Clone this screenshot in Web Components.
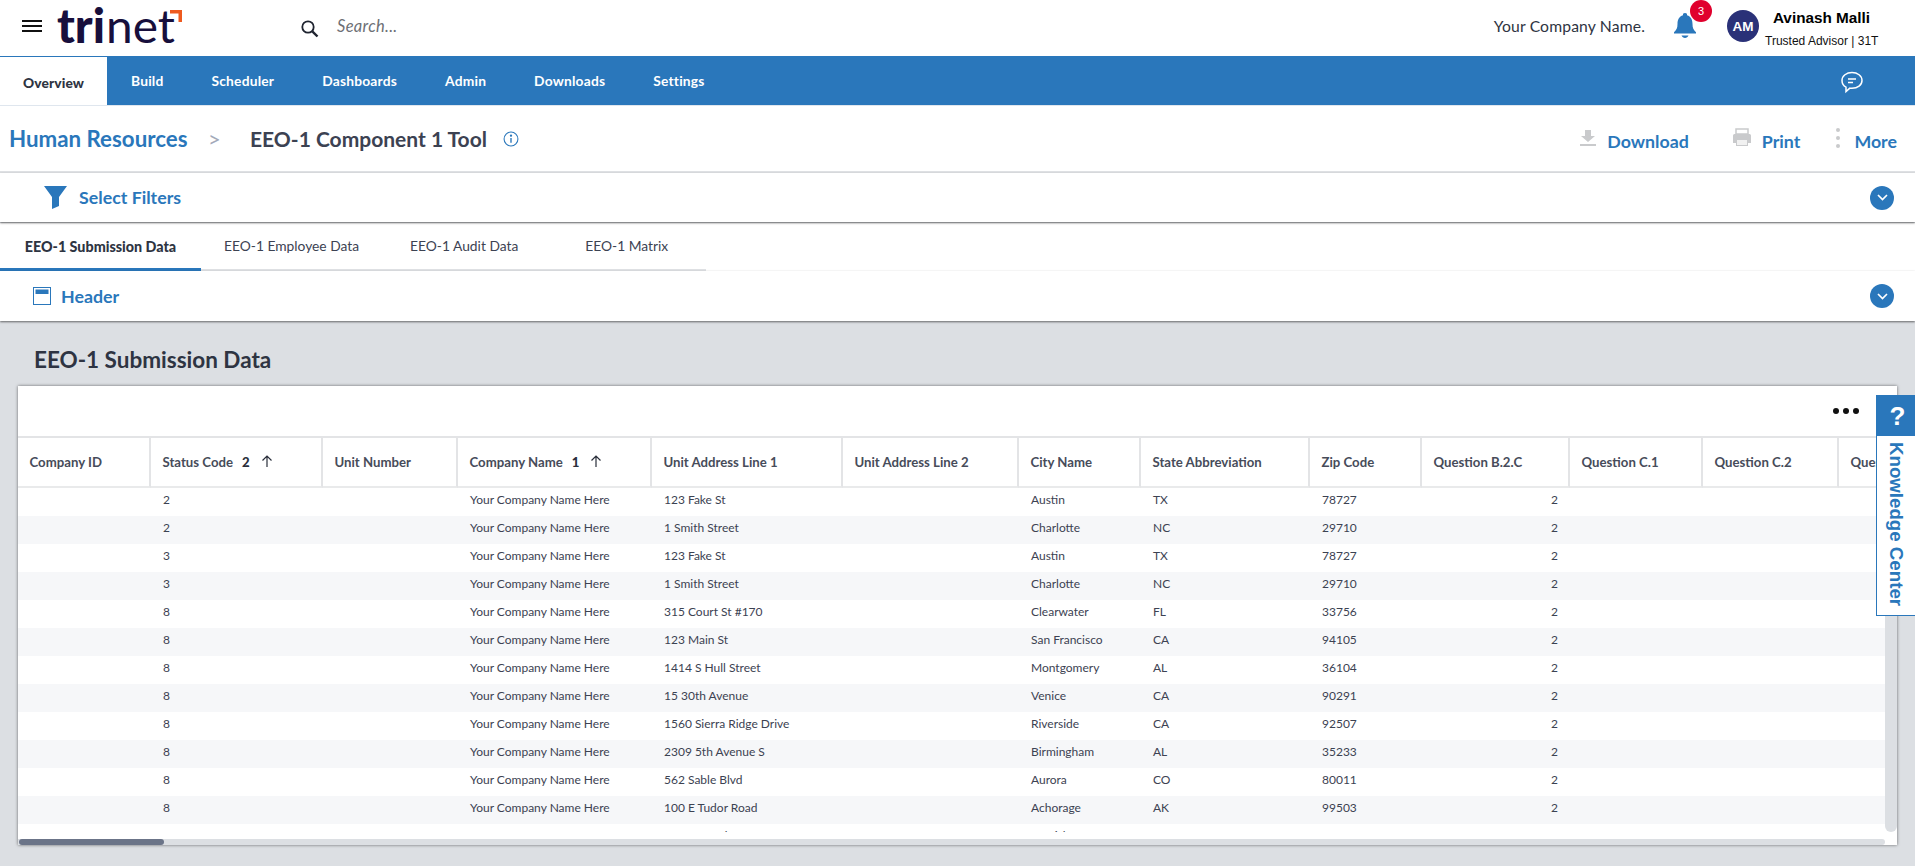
<!DOCTYPE html>
<html><head><meta charset="utf-8"><style>
html,body{margin:0;padding:0;background:#dcdfe3;height:866px;overflow:hidden}
body{font-family:Lato,"Liberation Sans",sans-serif;color:#2e3442}
</style></head><body>
<app-top></app-top>
<app-nav></app-nav>
<page-title></page-title>
<collapse-bar label="Select Filters" icon="filter" pad="44" gap="12" h="49" lift="2"></collapse-bar>
<tab-strip></tab-strip>
<collapse-bar label="Header" icon="header" pad="33" gap="10" h="50" lift="0"></collapse-bar>
<data-panel></data-panel>
<kc-tab></kc-tab>
<script>
const BLUE='#2a77bb';
function def(name,css,html,init){customElements.define(name,class extends HTMLElement{connectedCallback(){if(this.shadowRoot)return;const r=this.attachShadow({mode:'open'});r.innerHTML='<style>'+css+'</style>'+(typeof html==='function'?html(this):html);init&&init(r,this)}})}
def('app-top',`:host{display:flex;align-items:center;height:56px;background:#fff;position:relative}
.menu{margin-left:22px;margin-bottom:4px;width:20px;height:12px;display:flex;flex-direction:column;justify-content:space-between;flex:none}
.menu i{height:2px;background:#111;display:block}
.logo{margin-left:14px;width:130px;height:56px;flex:none;display:block}
.s{margin-left:114px;margin-top:2px;width:20px;height:20px;flex:none}
.search{margin-left:17px;font-style:italic;font-size:16.500px;color:#6d6f75;letter-spacing:.3px;margin-bottom:4px}
.sp{flex:1}
.co{font-size:15.700px;color:#2e3442;margin-right:28px;letter-spacing:.15px;margin-bottom:4px}
.bell{position:relative;width:30px;height:46px;margin-right:24px;align-self:flex-start}
.bell svg{position:absolute;left:0;top:12px}
.badge{position:absolute;left:17px;top:0;width:22px;height:22px;border-radius:50%;background:#e0002d;color:#fff;font:11px "Liberation Sans",sans-serif;display:flex;align-items:center;justify-content:center}
.av{width:32px;height:32px;border-radius:50%;background:#2a3178;color:#fff;font:700 13.500px "Liberation Sans",sans-serif;display:flex;align-items:center;justify-content:center;margin-right:6px;flex:none;margin-bottom:4px}
.who{width:113px;text-align:center;margin-right:37px;font-family:"Liberation Sans",sans-serif;color:#000;align-self:flex-start;flex:none;white-space:nowrap}
.who b{display:block;font-size:15.300px;line-height:18px;margin-top:9px}
.who span{display:block;font-size:12px;line-height:16px;margin-top:6px;color:#111}`,
`<div class="menu"><i></i><i></i><i></i></div>
<svg class="logo" viewBox="0 0 130 56"><text x="1" y="43" font-family="Lato,sans-serif" font-weight="900" font-size="47" fill="#170f3c" textLength="48" lengthAdjust="spacingAndGlyphs">tri</text><text x="50" y="43" font-family="Lato,sans-serif" font-weight="400" font-size="47" fill="#170f3c" textLength="69" lengthAdjust="spacingAndGlyphs">net</text><path d="M114 10h12v12h-3.500v-8.500h-8.500z" fill="#ee5a1f"/></svg>
<svg class="s" viewBox="0 0 20 20"><circle cx="8" cy="8" r="5.700" fill="none" stroke="#1f2430" stroke-width="1.800"/><path d="M12.300 12.300l5.200 5.200" stroke="#1f2430" stroke-width="2.400"/></svg>
<div class="search">Search...</div><div class="sp"></div>
<div class="co">Your Company Name.</div>
<div class="bell"><svg width="24" height="28" viewBox="0 0 24 28"><path d="M12 1a2 2 0 0 1 2 2.300c4 1.200 5.500 4.500 5.500 8.700 0 4 1 6 3.500 8.300v1.200H1v-1.200C3.500 18 4.500 16 4.500 12c0-4.200 1.500-7.500 5.500-8.700A2 2 0 0 1 12 1zM8.500 23.500h7c-.6 1.500-2 2.500-3.500 2.500s-2.900-1-3.500-2.500z" fill="${BLUE}"/></svg><div class="badge">3</div></div>
<div class="av">AM</div>
<div class="who"><b>Avinash Malli</b><span>Trusted Advisor | 31T</span></div>`);
def('app-nav',`:host{display:flex;height:50px;background:${BLUE};align-items:stretch;box-sizing:border-box;border-bottom:1px solid #dfe6ee}
a{color:#fff;font-weight:700;font-size:13.800px;display:flex;align-items:center;letter-spacing:.2px;padding-bottom:1px}
.on{background:#fff;color:#2e3442;width:107px;justify-content:center;box-sizing:border-box;border-top:1px solid ${BLUE};padding-top:2px;padding-bottom:0;font-weight:900;letter-spacing:.1px}
.sp{flex:1}svg{align-self:center;margin-right:51px;margin-top:2px}`,
`<a class="on">Overview</a><a style="margin-left:24px">Build</a><a style="margin-left:48px">Scheduler</a><a style="margin-left:48px">Dashboards</a><a style="margin-left:48px">Admin</a><a style="margin-left:48px">Downloads</a><a style="margin-left:48px">Settings</a><div class="sp"></div>
<svg width="24" height="24" viewBox="0 0 24 24" fill="none" stroke="#fff" stroke-width="1.500"><path d="M12 2.500c5.500 0 10 3.300 10 8s-4.500 7.800-10 7.800c-.8 0-1.500 0-2.200-.2L6 21.500v-4.300C3.500 15.800 2 13.400 2 10.500c0-4.700 4.500-8 10-8z"/><path d="M8 9h8M8 12.500h5"/></svg>`);
def('page-title',`:host{display:flex;align-items:center;height:67px;background:#fff;box-sizing:border-box;padding-left:9px;border-bottom:2px solid #dfe1e4}
.hr{color:${BLUE};font-weight:700;font-size:22.300px;width:179px;white-space:nowrap}
.gt{color:#a3a9b9;font-size:22px;margin:0 30px 0 20px;width:12px}
.t{color:#3c4252;font-weight:700;font-size:21px;white-space:nowrap}
.i{margin-left:16px}.sp{flex:1}
.a{color:${BLUE};font-weight:700;font-size:17.800px;display:flex;align-items:center;margin-top:4px}
.a svg{margin-right:10px;margin-bottom:6px}`,
`<span class="hr">Human Resources</span><span class="gt">&gt;</span><span class="t">EEO-1 Component 1 Tool</span>
<svg class="i" width="16" height="16" viewBox="0 0 15 15" fill="none" stroke="${BLUE}" stroke-width="1"><circle cx="7.500" cy="7.500" r="6.500"/><path d="M7.500 6.500v4.500" stroke-width="1.300"/><circle cx="7.500" cy="4.300" r=".6" fill="${BLUE}"/></svg>
<div class="sp"></div>
<div class="a" style="margin-right:43px"><svg width="18" height="18" viewBox="0 0 18 18" fill="#c9cacc"><path d="M6 1h6v6h4L9 13 2 7h4zM1 15h16v2H1z"/></svg>Download</div>
<div class="a" style="margin-right:35px"><svg width="20" height="20" viewBox="0 0 20 20"><path d="M4 1h12v5H4z" fill="none" stroke="#c9cacc" stroke-width="1.500"/><path d="M2.500 6h15A1.500 1.500 0 0 1 19 7.500V15h-3v3H4v-3H1V7.500A1.500 1.500 0 0 1 2.500 6z" fill="#c9cacc"/><path d="M5 12h10v5H5z" fill="#f1f1f1"/></svg>Print</div>
<div class="a" style="margin-right:18px"><svg width="6" height="22" viewBox="0 0 6 22" style="margin-right:13px" fill="#c9cacc"><circle cx="3" cy="3" r="2"/><circle cx="3" cy="11" r="2"/><circle cx="3" cy="19" r="2"/></svg>More</div>`);
def('collapse-bar',`:host{display:flex;align-items:center;background:#fff;box-sizing:border-box;box-shadow:0 1px 2px rgba(0,0,0,.55);position:relative;margin-bottom:1px}
.l{color:${BLUE};font-weight:700;font-size:17.800px}
.sp{flex:1}
.c{width:24px;height:24px;border-radius:50%;background:${BLUE};margin-right:21px;display:flex;align-items:center;justify-content:center}`,
h=>{const f=h.getAttribute('icon')==='filter'?
`<svg width="23" height="23" viewBox="0 0 23 23" fill="${BLUE}"><path d="M0 0h23L15 11V20L8 23V11z"/></svg>`:
`<svg width="18" height="18" viewBox="0 0 18 18" fill="none"><rect x=".5" y=".5" width="17" height="17" stroke="${BLUE}" stroke-width="1"/><rect x="2.500" y="2.500" width="13" height="4.500" fill="${BLUE}"/></svg>`;
return `<span style="display:flex;margin-left:${h.getAttribute('pad')}px;margin-right:${h.getAttribute('gap')}px">${f}</span><span class="l" style="margin-bottom:${h.getAttribute('lift')}px">${h.getAttribute('label')}</span><div class="sp"></div><div class="c"><svg width="11" height="7" viewBox="0 0 11 7" fill="none" stroke="#fff" stroke-width="1.700"><path d="M1 1l4.500 4.500L10 1"/></svg></div>`},
(r,h)=>{h.style.height=h.getAttribute('h')+'px'});
def('tab-strip',`:host{display:block;height:48px;background:#fff;box-sizing:border-box}
.w{display:flex;width:706px;height:48px;box-sizing:border-box;border-bottom:2px solid #dfe1e4}
a{display:flex;align-items:center;font-size:13.800px;color:#3c4252;height:46px;box-sizing:border-box;white-space:nowrap;padding-bottom:2px}
.on{font-size:14.300px;font-weight:900;color:#2e3442;box-sizing:border-box;width:201px;justify-content:center;border-bottom:3px solid ${BLUE};height:48px;padding:1px 0 0}`,
`<div class="w"><a class="on">EEO-1 Submission Data</a><a style="margin-left:23px">EEO-1 Employee Data</a><a style="margin-left:51px">EEO-1 Audit Data</a><a style="margin-left:67px">EEO-1 Matrix</a></div>`);
const COLS=[133,172,135,194,191,176,122,169,112,148,133,136,120];
const HEADS=['Company ID','Status Code|2','Unit Number','Company Name|1','Unit Address Line 1','Unit Address Line 2','City Name','State Abbreviation','Zip Code','Question B.2.C','Question C.1','Question C.2','Question C.3'];
const ROWS=[['2','123 Fake St','','Austin','TX','78727'],['2','1 Smith Street','','Charlotte','NC','29710'],['3','123 Fake St','','Austin','TX','78727'],['3','1 Smith Street','','Charlotte','NC','29710'],['8','315 Court St #170','','Clearwater','FL','33756'],['8','123 Main St','','San Francisco','CA','94105'],['8','1414 S Hull Street','','Montgomery','AL','36104'],['8','15 30th Avenue','','Venice','CA','90291'],['8','1560 Sierra Ridge Drive','','Riverside','CA','92507'],['8','2309 5th Avenue S','','Birmingham','AL','35233'],['8','562 Sable Blvd','','Aurora','CO','80011'],['8','100 E Tudor Road','','Achorage','AK','99503'],['8','2044 N 2nd Street','#1','Harrisburg','PA','17101']];
const tpl=COLS.map(c=>c+'px').join(' ');
def('data-panel',`:host{display:block;height:542px;padding:25px 18px 0 18px;box-sizing:border-box}
h2{margin:0;font-size:22.500px;line-height:26px;font-weight:700;color:#2e3442;padding-left:16px}
.card{margin-top:13px;height:459px;background:#fff;box-shadow:0 0 3px rgba(0,0,0,.55);display:grid;grid-template-rows:50px 1fr 13px;grid-template-columns:1fr 12px;overflow:hidden;position:relative;width:1879px}
.tb{grid-column:1/3;display:flex;justify-content:flex-end;align-items:center;gap:4px;padding-right:38px}
.tb i{width:6px;height:6px;border-radius:50%;background:#111;display:block}
.tv{overflow:hidden;min-width:0}
.gr{display:grid;grid-template-columns:${tpl};width:max-content}
.h{height:52px;box-sizing:border-box;border-top:2px solid #e3e4e6;border-bottom:2px solid #e9eaeb;border-right:2px solid #e3e4e6;display:flex;align-items:center;padding-left:11.500px;font-size:13.200px;font-weight:700;color:#474c5a;white-space:nowrap}
.h:nth-child(13){border-right:0}
.h b{color:#2a2f3b;margin-left:9px;font-weight:900}.h svg{margin-left:11px;margin-top:-2px}
.c{height:28px;box-sizing:border-box;display:flex;align-items:center;padding:0 0 6px 12px;font-size:12px;color:#3c4252;white-space:nowrap}
.c.s{background:#f6f7f9}
.c.r{justify-content:flex-end;padding:0 12px 6px 0}
.vs{background:#dcdfe3;border-radius:0 0 6px 6px;margin-top:51px}
.hs{background:#dcdfe3;height:6px;margin-top:7px;position:relative;border-radius:0 3px 3px 0}
.hs i{position:absolute;left:1px;top:0;width:145px;height:6px;background:#6b7488;border-radius:3px}`,
()=>{let g='';HEADS.forEach(h=>{const[a,b]=h.split('|');g+=`<div class="h">${a}${b?`<b>${b}</b><svg width="12" height="12" viewBox="0 0 12 12" fill="none" stroke="#2a2f3b" stroke-width="1.200"><path d="M6 12V1M1.500 5.500L6 1l4.500 4.500"/></svg>`:''}</div>`});
ROWS.forEach((r,i)=>{const s=i%2?' s':'';const v=['',r[0],'','Your Company Name Here',r[1],r[2],r[3],r[4],r[5],'','','',''];v.forEach((t,j)=>{g+=`<div class="c${s}${j===9?' r':''}">${j===9?'2':t}</div>`})});
return `<h2>EEO-1 Submission Data</h2><div class="card"><div class="tb"><i></i><i></i><i></i></div><div class="tv"><div class="gr">${g}</div></div><div class="vs"></div><div class="hs"><i></i></div><div></div></div>`});
def('kc-tab',`:host{position:absolute;left:1876px;top:395px;width:39px;height:221px;box-sizing:border-box;border:1px solid ${BLUE};border-right:0;background:#fff;display:block;font-family:"Liberation Sans",sans-serif}
.q{height:40px;background:${BLUE};color:#fff;font-weight:700;font-size:26px;display:flex;align-items:center;justify-content:center;padding-left:3px}
.k{writing-mode:vertical-rl;color:${BLUE};font-weight:700;font-size:18.700px;line-height:38px;margin-top:6px;white-space:nowrap;height:172px}`,
`<div class="q">?</div><div class="k">Knowledge Center</div>`);
</script></body></html>
